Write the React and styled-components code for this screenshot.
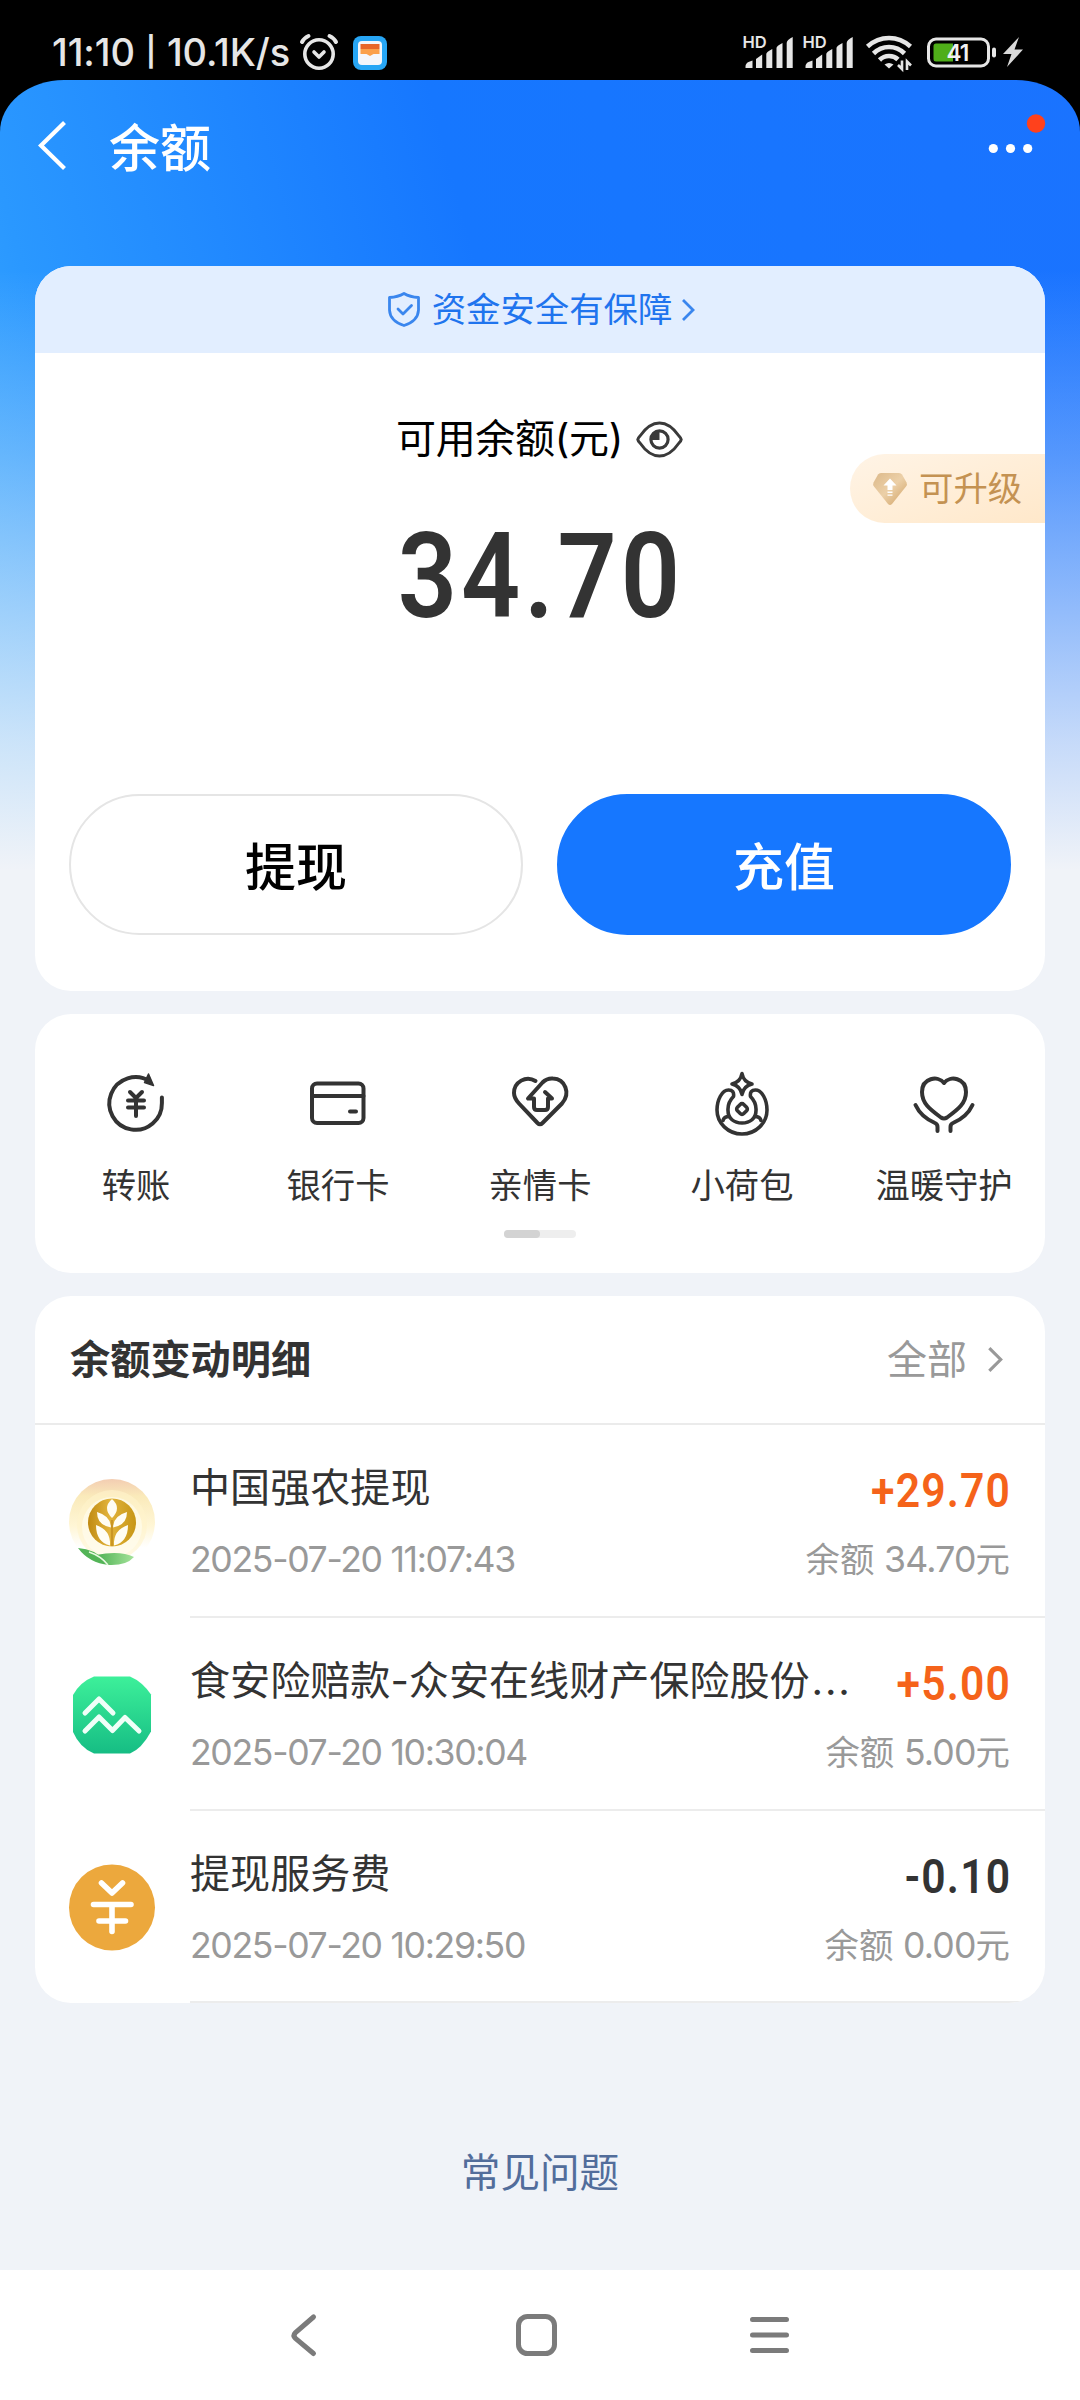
import React from "react";
import styled, { createGlobalStyle } from "styled-components";

const GlobalStyle = createGlobalStyle`
  * { box-sizing: border-box; }
  body {
    margin: 0;
    background: #000;
    font-family: Inter, "Noto Sans CJK SC", sans-serif;
    color: #333;
  }
`;

const Screen = styled.div`
  width: 1080px;
  height: 2400px;
  display: flex;
  flex-direction: column;
  background: #000;
  overflow: hidden;
`;

const StatusBar = styled.header`
  height: 80px;
  flex: none;
  display: flex;
  align-items: center;
  justify-content: space-between;
  padding: 24px 57px 0 52px;
  color: #e6e6e6;
`;

const StatusGroup = styled.div`
  display: flex;
  align-items: center;
`;

const StatusText = styled.div`
  display: flex;
  align-items: center;
  width: 248px;
  font-size: 38px;
  line-height: 44px;
  font-weight: 500;
  letter-spacing: -0.1px;
  white-space: nowrap;
`;

const Separator = styled.span`
  font-size: 29px;
  font-weight: 600;
  width: 32px;
  text-align: center;
`;

const Glyph = styled.svg`
  display: block;
  flex: none;
  overflow: visible;
  width: ${(p) => p.$w}px;
  height: ${(p) => p.$h}px;
  margin: ${(p) => p.$m || "0"};
`;

const Page = styled.main`
  flex: 1;
  display: flex;
  flex-direction: column;
  border-radius: 64px 64px 0 0 / 52px 52px 0 0;
  background:
    linear-gradient(180deg, rgba(240, 243, 248, 0) 190px, rgba(240, 243, 248, 0.28) 375px, rgba(240, 243, 248, 0.8) 660px, #f0f3f8 790px),
    linear-gradient(75deg, #3aaaff 0, #2a98ff 180px, #1677ff 620px, #1a73ff 100%) top / 1080px 800px no-repeat;
`;

const TitleBar = styled.div`
  height: 186px;
  flex: none;
  display: flex;
  align-items: flex-start;
  padding: 41px 43px 0 38px;
`;

const PageTitle = styled.h1`
  flex: 1;
  margin: 0;
  padding-top: 2px;
  font-size: 51px;
  line-height: 52px;
  font-weight: 500;
  color: #fff;
`;

const Content = styled.div`
  flex: 1;
  display: flex;
  flex-direction: column;
  gap: 23px;
  padding: 0 35px;
`;

const Card = styled.section`
  height: ${(p) => p.$h}px;
  flex: none;
  display: flex;
  flex-direction: column;
  background: #fff;
  border-radius: 36px;
  overflow: hidden;
  position: relative;
`;

const SafetyBanner = styled.div`
  height: 87px;
  flex: none;
  display: flex;
  align-items: center;
  justify-content: center;
  padding-left: 3px;
  background: #e2eeff;
  color: #1f74ee;
  font-size: 34.4px;
  line-height: 44px;
`;

const BalanceLabel = styled.div`
  display: flex;
  align-items: center;
  justify-content: center;
  margin-top: 62px;
  font-size: 40px;
  line-height: 48px;
  letter-spacing: -0.3px;
  color: #000;
`;

const BalanceAmount = styled.div`
  margin-top: 54px;
  text-align: center;
  font-family: Roboto, sans-serif;
  font-size: 118px;
  line-height: 120px;
  font-weight: 650;
  letter-spacing: 4.4px;
  text-indent: 2px;
  transform: scaleX(0.88);
  color: #333;
`;

const UpgradeBadge = styled.div`
  position: absolute;
  right: 0;
  top: 188px;
  width: 195px;
  height: 69px;
  display: flex;
  align-items: center;
  padding-left: 23px;
  border-radius: 35px 0 0 35px;
  background: linear-gradient(160deg, #fff4e6, #ffe8ca);
  color: #c49252;
  font-size: 34.4px;
  line-height: 44px;
`;

const ButtonRow = styled.div`
  display: flex;
  gap: 34px;
  margin-top: auto;
  padding: 0 34px 56px;
`;

const ActionButton = styled.button`
  flex: 1;
  height: 141px;
  padding: 6px 0 0;
  border-radius: 71px;
  border: 2px solid ${(p) => (p.$primary ? "#1677ff" : "#e5e5e5")};
  background: ${(p) => (p.$primary ? "#1677ff" : "#fff")};
  color: ${(p) => (p.$primary ? "#fff" : "#000")};
  font-family: inherit;
  font-size: 51px;
  line-height: 60px;
  font-weight: 450;
`;

const ServiceGrid = styled.div`
  display: grid;
  grid-template-columns: repeat(5, 1fr);
  padding-top: 47px;
`;

const Service = styled.div`
  display: flex;
  flex-direction: column;
  align-items: center;
  gap: 24px;
  font-size: 34.3px;
  line-height: 44px;
  white-space: nowrap;
`;

const Pager = styled.div`
  width: 72px;
  height: 8px;
  margin: 22px auto 0;
  border-radius: 4px;
  background: #eee;
`;

const PagerThumb = styled.div`
  width: 36px;
  height: 8px;
  border-radius: 4px;
  background: #d3d3d3;
`;

const ListHeader = styled.div`
  height: 129px;
  flex: none;
  display: flex;
  align-items: center;
  justify-content: space-between;
  padding: 0 42px 0 35px;
  border-bottom: 2px solid #ebebeb;
`;

const ListTitle = styled.h2`
  margin: 0;
  font-size: 40.2px;
  line-height: 48px;
  font-weight: 700;
`;

const AllLink = styled.div`
  display: flex;
  align-items: center;
  gap: 20px;
  color: #999;
  font-size: 40px;
  line-height: 48px;
`;

const Row = styled.div`
  height: ${(p) => p.$h}px;
  flex: none;
  display: flex;
  align-items: center;
  padding-left: 34px;
`;

const RowBody = styled.div`
  flex: 1;
  align-self: stretch;
  display: flex;
  flex-direction: column;
  gap: 23px;
  margin-left: 35px;
  padding: 39px 35px 0 0;
  border-bottom: 2px solid #ececec;
`;

const RowLine = styled.div`
  display: flex;
  justify-content: space-between;
  height: 48px;
  white-space: nowrap;
`;

const RowTitle = styled.span`
  font-size: 40.1px;
  line-height: 48px;
`;

const Dots = styled.span`
  letter-spacing: 1.8px;
  margin-left: 2px;
`;

const Amount = styled.span`
  font-family: Roboto, sans-serif;
  font-size: 48.5px;
  line-height: 53px;
  font-weight: 650;
  letter-spacing: 1.3px;
  margin-right: -1px;
  transform: scaleX(0.88);
  transform-origin: right center;
  color: ${(p) => (p.$income ? "#f5631a" : "#333")};
`;

const Meta = styled.span`
  font-size: ${(p) => (p.$date ? 35.6 : 34.4)}px;
  line-height: 49px;
  color: #999;
  letter-spacing: ${(p) => (p.$date ? "-1.33px" : "0")};
`;

const MetaNumber = styled.span`
  font-size: 35.6px;
  letter-spacing: -0.8px;
`;

const FaqLink = styled.a`
  margin: 123px auto 0;
  font-size: 39.6px;
  line-height: 48px;
  color: #526d9b;
`;

const NavBar = styled.nav`
  height: 130px;
  flex: none;
  display: flex;
  align-items: center;
  justify-content: space-between;
  padding: 0 291px 0 291px;
  background: #fff;
`;

const AlarmIcon = () => (
  <Glyph $w={38} $h={36} viewBox="0 0 38 36" fill="none" stroke="#e6e6e6" strokeLinecap="round" strokeLinejoin="round">
    <circle cx="19" cy="20" r="14.2" strokeWidth="3.6" />
    <path d="M14 18l5 5 5-5" strokeWidth="3.6" />
    <path d="M2 8Q4 4 8.500 2M36 8Q34 4 29.500 2" strokeWidth="4" />
  </Glyph>
);

const AppBadge = () => (
  <Glyph $w={34} $h={34} $m="1px 0 0 15px" viewBox="0 0 34 34">
    <rect width="34" height="34" rx="8" fill="#27a6f5" />
    <rect x="5" y="5" width="24" height="24" rx="4" fill="#f4f6fb" />
    <path d="M7.500 8h19v5h-19z" fill="#e8672a" />
    <path d="M7.500 13h19v5h-6l-3.500 2-3.500-2h-6z" fill="#fba04b" />
  </Glyph>
);

const SignalIcon = ({ m }) => (
  <Glyph $w={50} $h={34} $m={m} viewBox="0 0 50 34" fill="#e6e6e6">
    <text x="-0.500" y="13" fontFamily="Inter, sans-serif" fontSize="16.500" fontWeight="600">HD</text>
    <path d="M2.500 31.500q0-3 3-4.500l4-1.500V33h-7zM13 24l6.200-4.500V33H13zM23.300 19q0-2 6-5V33h-6zM33.500 13q0-2 6-5V33h-6zM43.700 8q0-3 6-6V33h-6z" />
  </Glyph>
);

const WifiIcon = () => (
  <Glyph $w={46} $h={35} $m="0 0 0 13px" viewBox="0 0 46 35" fill="none" stroke="#e6e6e6" strokeWidth="4.600">
    <path d="M1.500 11.500Q11 3 23 3t21.500 8.500M7.500 18.500Q14 12 23 12t15.500 6.500M13.500 25Q17.500 21 23 21t9 3.500" />
    <path d="M18.500 29.500q4.500-3 9 0L23 33.500z" fill="#e6e6e6" stroke="none" />
    <path d="M36 25.500V34l-4-4M41 35v-8.500l4 4" strokeWidth="2.600" />
  </Glyph>
);

const BatteryIcon = () => (
  <Glyph $w={70} $h={31} $m="0 0 0 15px" viewBox="0 0 70 31">
    <rect x="1.500" y="2" width="60" height="27" rx="7.500" fill="none" stroke="#e6e6e6" strokeWidth="3" />
    <path d="M9 6.500h17v18H9q-2.500 0-2.500-2.500V9Q6.500 6.500 9 6.500z" fill="#4fae19" />
    <rect x="65" y="10.500" width="4" height="10" rx="2" fill="#e6e6e6" />
    <text x="30.500" y="23.500" textAnchor="middle" fontFamily="Inter, sans-serif" fontSize="22.500" fontWeight="600" letterSpacing="-1" fill="#f2f2f2">41</text>
  </Glyph>
);

const BoltIcon = () => (
  <Glyph $w={20} $h={30} $m="0 0 0 6px" viewBox="0 0 20 30" fill="#d9d9d9">
    <path d="M16 0L0 17h8.500L4 30 20 12.500h-8.500z" />
  </Glyph>
);

const BackIcon = () => (
  <Glyph $w={28} $h={49} $m="0 43px 0 0" viewBox="0 0 28 49" fill="none" stroke="#fff" strokeWidth="4.200">
    <path d="M26.500 1.500L3 24.500l23.500 23" />
  </Glyph>
);

const MoreIcon = () => (
  <Glyph $w={56} $h={50} $m="-8px -9px 0 0" viewBox="0 0 56 50" fill="#fff">
    <circle cx="3.300" cy="35.500" r="4.600" />
    <circle cx="20.500" cy="35.500" r="4.600" />
    <circle cx="37.700" cy="35.500" r="4.600" />
    <circle cx="46" cy="10.500" r="9.200" fill="#ff411c" />
  </Glyph>
);

const ShieldIcon = () => (
  <Glyph $w={32} $h={35} $m="0 12px 0 0" viewBox="0 0 32 35" fill="none" stroke="#3a86ee" strokeWidth="2.800" strokeLinejoin="round" strokeLinecap="round">
    <path d="M16 1.500Q22 5 30.500 5.500V18Q30 29 16 33.500 2 29 1.500 18V5.500Q10 5 16 1.500z" />
    <path d="M10 17l5 5 8.500-8.500" />
  </Glyph>
);

const Chevron = ({ w, h, color, m, sw }) => (
  <Glyph $w={w} $h={h} $m={m} viewBox="0 0 14 22" fill="none" stroke={color} strokeWidth={sw}>
    <path d="M2 1l10 10L2 21" />
  </Glyph>
);

const EyeIcon = () => (
  <Glyph $w={47} $h={37} $m="0 1px 0 13px" viewBox="0 0 47 37" fill="none" stroke="#3a3a3a" strokeWidth="3">
    <path d="M1.800 18.500Q2 17 4 15 13 2 23.500 2T43 15q2 2 2.200 3.500-.2 1.500-2.200 3.500Q34 35 23.500 35T4 22q-2-2-2.200-3.500z" />
    <circle cx="23.500" cy="18.500" r="8.600" strokeWidth="3.200" />
    <path d="M23.500 10v9H15a9 9 0 0 1 8.500-9z" fill="#3a3a3a" stroke="none" />
  </Glyph>
);

const DiamondIcon = () => (
  <Glyph $w={34} $h={32} $m="0 12px 0 0" viewBox="0 0 34 32">
    <defs>
      <linearGradient id="gem" x1="0" y1="0" x2="1" y2="1">
        <stop offset="0" stopColor="#dcb98a" />
        <stop offset="0.500" stopColor="#ecd0a8" />
        <stop offset="1" stopColor="#cf9f60" />
      </linearGradient>
    </defs>
    <path d="M8 0h18q2 0 3 1.500l4.500 8q1 2-.5 4L19 31q-2 2-4 0L1 13.500q-1.500-2-.5-4L5 1.500Q6 0 8 0z" fill="url(#gem)" />
    <path d="M17 5.500l6.500 7h-4V17h-5v-4.500h-4zM14.500 18.500h5v1.500h-5zM14.500 21.500h5v1.200h-5z" fill="#fff" />
  </Glyph>
);

const ServiceSvg = ({ children }) => (
  <Glyph $w={68} $h={68} $m="12px 0 -1px" viewBox="0 0 68 68" fill="none" stroke="#333" strokeWidth="4" strokeLinecap="round" strokeLinejoin="round">
    {children}
  </Glyph>
);

const TransferIcon = () => (
  <ServiceSvg>
    <path d="M59.900 24.500V30A26.300 26.300 0 1 1 48 8.500" />
    <path d="M46.500 1l5 11.500-9-3z" fill="#333" strokeWidth="1.500" />
    <path d="M28 19l6 6 6-6M26 27.500h16M26 34.500h16M34 26v17" strokeWidth="4" />
  </ServiceSvg>
);

const CardIcon = () => (
  <ServiceSvg>
    <rect x="8" y="10.500" width="51.500" height="39.500" rx="5" />
    <path d="M8 23h51.500M46 38.500h6" />
  </ServiceSvg>
);

const FamilyCardIcon = () => (
  <ServiceSvg>
    <path d="M29.500 8C20 2 8 9 8 20q0 5 5 10.500L31.500 50q2.500 2.500 5 0L56 30.500C65 20 59 6 47 5.500q-6-.5-10.500 4L22 25.500h6V34q0 3 3 3h8q3 0 3-3v-8.500h4L39 19" />
  </ServiceSvg>
);

const PurseIcon = () => (
  <ServiceSvg>
    <path d="M34 .5q1.500 8.500 10 10.500-8.500 2-10 10.500-1.500-8.500-10-10.500 8.500-2 10-10.500z" strokeWidth="3.600" />
    <path d="M25.500 23.500q1-6.500-5-6.500C14 17 9 27 9 37c0 13 11 24 25 24s25-11 25-24c0-10-5-20-11.500-20q-6 0-5 6.500 6 6 5.500 14c0 8-6 12.500-14 12.500s-14-4.500-14-12.500q-.5-8 5.500-14z" strokeWidth="3.600" />
    <path d="M15 47.500q1-4 6-4M53 47.500q-1-4-6-4" strokeWidth="3.600" />
    <rect x="29.500" y="31.500" width="9" height="9" rx="2.500" transform="rotate(45 34 36)" strokeWidth="3.600" />
  </ServiceSvg>
);

const CareIcon = () => (
  <ServiceSvg>
    <path d="M34 10C28 2 12 5 12 19c0 12 9 18 19 25.500q3 2 6 0C47 37 56 31 56 19 56 5 40 2 34 10z" />
    <path d="M5.500 32Q11 44 25 50q2.500 1 2.500 4v4M62.500 32Q57 44 43 50q-2.500 1-2.500 4v4" />
  </ServiceSvg>
);

const WheatLogo = () => (
  <Glyph $w={86} $h={86} viewBox="0 0 86 86">
    <defs>
      <linearGradient id="halo" x1="0" y1="0" x2="0" y2="1">
        <stop offset="0" stopColor="#f3cdb2" />
        <stop offset="0.200" stopColor="#faeaba" />
        <stop offset="0.550" stopColor="#fff6d6" />
        <stop offset="0.800" stopColor="#fff" />
      </linearGradient>
      <linearGradient id="gold" x1="0" y1="0" x2="1" y2="0">
        <stop offset="0" stopColor="#c08a12" />
        <stop offset="0.450" stopColor="#e2b43c" />
        <stop offset="1" stopColor="#c79616" />
      </linearGradient>
      <linearGradient id="leaf" x1="0" y1="0" x2="1" y2="0">
        <stop offset="0" stopColor="#4db052" />
        <stop offset="1" stopColor="#a4e39a" />
      </linearGradient>
    </defs>
    <circle cx="43" cy="43" r="43" fill="url(#halo)" />
    <circle cx="43" cy="46" r="35" fill="#fff4cc" opacity="0.600" />
    <circle cx="43" cy="48" r="30" fill="#fffdf2" opacity="0.600" />
    <circle cx="43" cy="43.500" r="24" fill="url(#gold)" />
    <g fill="#fffdf3">
      <path d="M43 20q10 9 0 19-10-10 0-19z" />
      <path d="M28 33q0 13 14 15.500Q42 37 28 33zM58 33q0 13-14 15.500Q44 37 58 33z" />
      <path d="M27 46q0 17 14 20.500Q42 51 27 46zM59 46q0 17-14 20.500Q44 51 59 46z" />
    </g>
    <path d="M43 41v26" stroke="#c99524" strokeWidth="2.200" />
    <path d="M9 69q17 1 27 13l4 4Q20 84 9 69z" fill="#53b457" />
    <path d="M27 76q7 3 12 10 18 1 26-8-14-7-38-2z" fill="url(#leaf)" />
    <path d="M20 73q12 4 19 13" fill="none" stroke="#e9f9e2" strokeWidth="1.500" />
  </Glyph>
);

const InsuranceLogo = () => (
  <Glyph $w={86} $h={86} viewBox="0 0 86 86">
    <defs>
      <linearGradient id="mint" x1="0" y1="0" x2="0" y2="1">
        <stop offset="0" stopColor="#3df09a" />
        <stop offset="1" stopColor="#16bd84" />
      </linearGradient>
    </defs>
    <path d="M25 4.500h36q12 5 21 18v37q-9 17-21 22H25Q11 76 4 60V23Q11 10 25 4.500z" fill="url(#mint)" />
    <path d="M16 41l14-14 14 14M16 59l14-14 13.500 13.500L56 45.500 70 59" fill="none" stroke="#effff8" strokeWidth="5" strokeLinecap="round" strokeLinejoin="round" />
  </Glyph>
);

const FeeLogo = () => (
  <Glyph $w={86} $h={86} viewBox="0 0 86 86" fill="none" stroke="#fff" strokeWidth="5.600" strokeLinecap="round" strokeLinejoin="round">
    <circle cx="43" cy="43.500" r="43" fill="#eca83d" stroke="none" />
    <path d="M32.500 19L43 29l10.500-10M24.500 40.500h37.500M30 57h26.500M43 41v26.500" />
  </Glyph>
);

const services = [
  { label: "转账", Icon: TransferIcon },
  { label: "银行卡", Icon: CardIcon },
  { label: "亲情卡", Icon: FamilyCardIcon },
  { label: "小荷包", Icon: PurseIcon },
  { label: "温暖守护", Icon: CareIcon },
];

const records = [
  { title: "中国强农提现", amount: "+29.70", income: true, time: "2025-07-20 11:07:43", balance: "34.70", Logo: WheatLogo, h: 193 },
  { title: "食安险赔款-众安在线财产保险股份", cut: true, amount: "+5.00", income: true, time: "2025-07-20 10:30:04", balance: "5.00", Logo: InsuranceLogo, h: 193 },
  { title: "提现服务费", amount: "-0.10", income: false, time: "2025-07-20 10:29:50", balance: "0.00", Logo: FeeLogo, h: 192 },
];

export default function App() {
  return (
    <Screen>
      <GlobalStyle />
      <StatusBar>
        <StatusGroup>
          <StatusText>
            <span>11:10</span>
            <Separator>|</Separator>
            <span>10.1K/s</span>
          </StatusText>
          <AlarmIcon />
          <AppBadge />
        </StatusGroup>
        <StatusGroup>
          <SignalIcon />
          <SignalIcon m="0 0 0 10px" />
          <WifiIcon />
          <BatteryIcon />
          <BoltIcon />
        </StatusGroup>
      </StatusBar>
      <Page>
        <TitleBar>
          <BackIcon />
          <PageTitle>余额</PageTitle>
          <MoreIcon />
        </TitleBar>
        <Content>
          <Card $h={725}>
            <SafetyBanner>
              <ShieldIcon />
              资金安全有保障
              <Chevron w={14} h={22} color="#3a86ee" sw={2.8} m="0 0 0 9px" />
            </SafetyBanner>
            <BalanceLabel>
              可用余额(元)
              <EyeIcon />
            </BalanceLabel>
            <BalanceAmount>34.70</BalanceAmount>
            <UpgradeBadge>
              <DiamondIcon />
              可升级
            </UpgradeBadge>
            <ButtonRow>
              <ActionButton>提现</ActionButton>
              <ActionButton $primary>充值</ActionButton>
            </ButtonRow>
          </Card>
          <Card $h={259}>
            <ServiceGrid>
              {services.map(({ label, Icon }) => (
                <Service key={label}>
                  <Icon />
                  {label}
                </Service>
              ))}
            </ServiceGrid>
            <Pager>
              <PagerThumb />
            </Pager>
          </Card>
          <Card $h={707}>
            <ListHeader>
              <ListTitle>余额变动明细</ListTitle>
              <AllLink>
                全部
                <Chevron w={16} h={25} color="#999" sw={2.8} />
              </AllLink>
            </ListHeader>
            {records.map(({ title, cut, amount, income, time, balance, Logo, h }) => (
              <Row key={time} $h={h}>
                <Logo />
                <RowBody>
                  <RowLine>
                    <RowTitle>
                      {title}
                      {cut && <Dots>...</Dots>}
                    </RowTitle>
                    <Amount $income={income}>{amount}</Amount>
                  </RowLine>
                  <RowLine>
                    <Meta $date>{time}</Meta>
                    <Meta>
                      余额 <MetaNumber>{balance}</MetaNumber>元
                    </Meta>
                  </RowLine>
                </RowBody>
              </Row>
            ))}
          </Card>
          <FaqLink>常见问题</FaqLink>
        </Content>
        <NavBar>
          <Glyph $w={26} $h={42} viewBox="0 0 26 42" fill="none" stroke="#7b7b7b" strokeWidth="5" strokeLinecap="round">
            <path d="M22.500 3L4.500 18.500q-3 3 0 6L22.500 39.500" />
          </Glyph>
          <Glyph $w={41} $h={42} $m="0 0 0 6px" viewBox="0 0 41 42" fill="none" stroke="#7b7b7b" strokeWidth="5">
            <rect x="2.500" y="2.500" width="36" height="37" rx="9" />
          </Glyph>
          <Glyph $w={39} $h={36} viewBox="0 0 39 36" fill="none" stroke="#7b7b7b" strokeWidth="5" strokeLinecap="round">
            <path d="M2.500 2.500h34M2.500 18h34M2.500 33.500h34" />
          </Glyph>
        </NavBar>
      </Page>
    </Screen>
  );
}
